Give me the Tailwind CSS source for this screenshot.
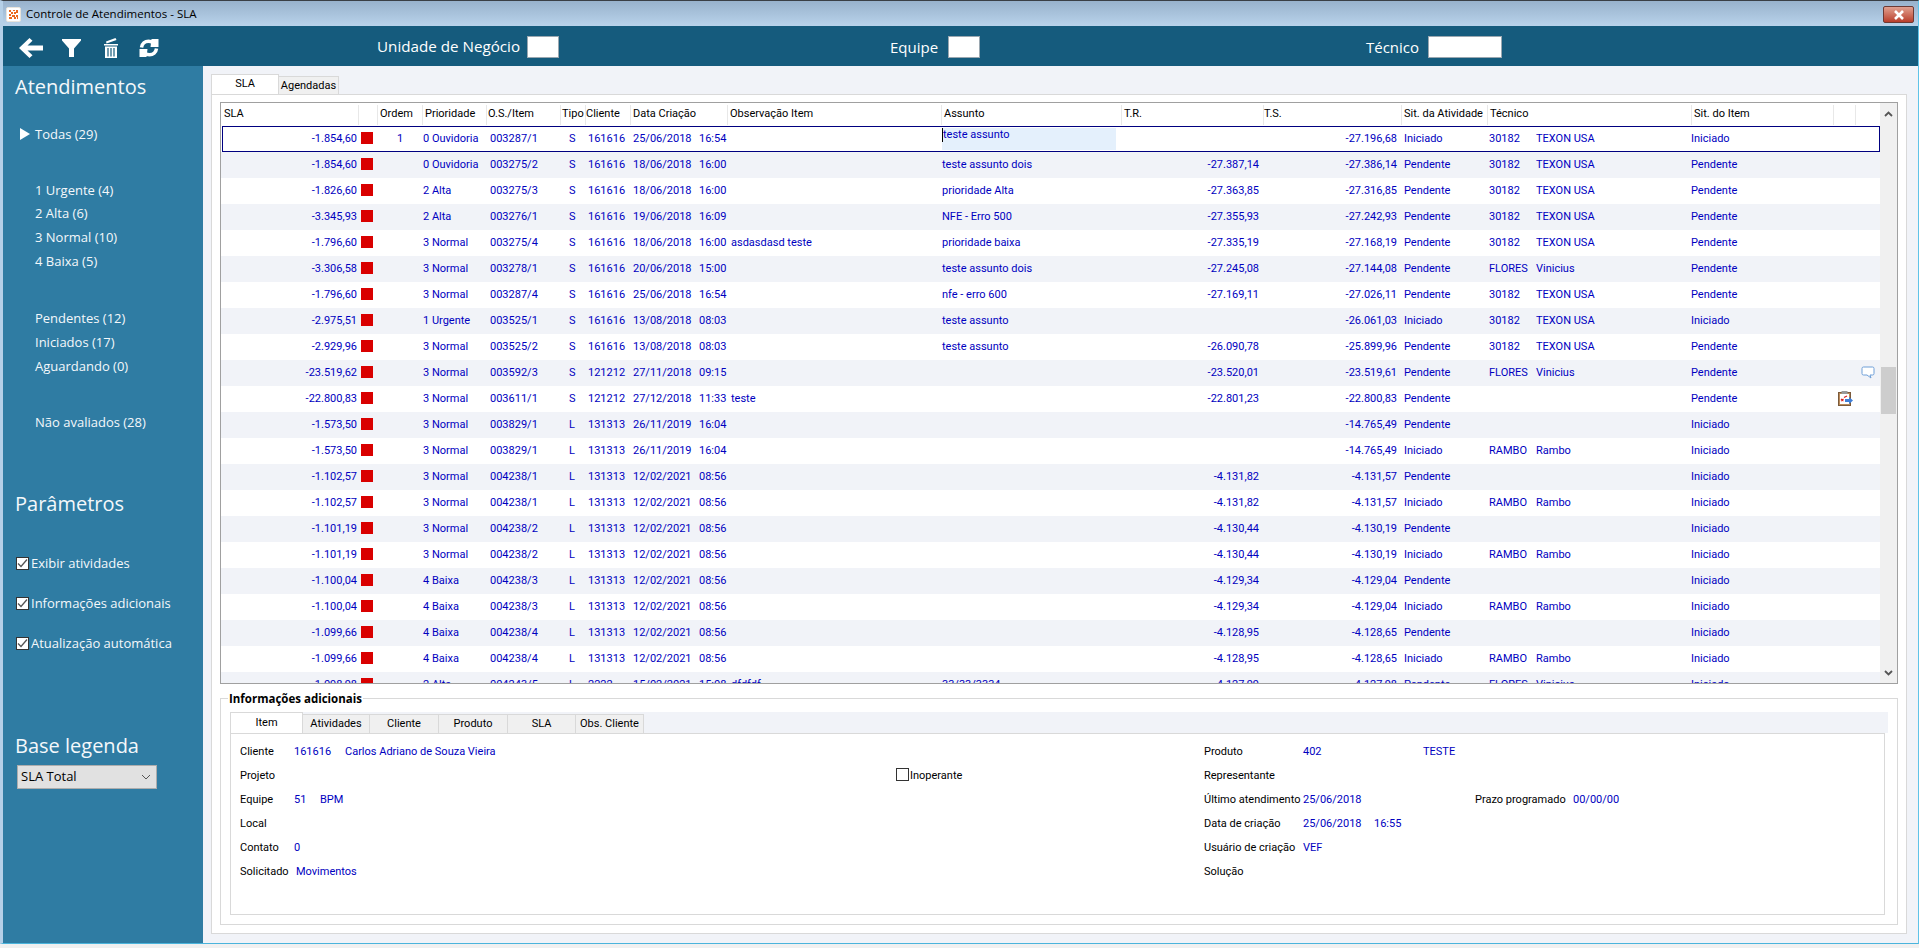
<!DOCTYPE html>
<html lang="pt-BR">
<head>
<meta charset="UTF-8">
<title>Controle de Atendimentos - SLA</title>
<script src="https://cdn.jsdelivr.net/npm/@tailwindcss/browser@4"></script>
</head>
<body class="w-[1919px] h-[948px] overflow-hidden bg-[#f0f0f0] font-['Open_Sans',sans-serif]">
<div class="h-[944px] flex flex-col border-t border-[#3a3f45] border-l-[3px] border-r border-l-[#b5d0e8] border-r-[#5fc3e8] border-b border-b-[#4ab4dc] bg-[#f1f3f8]">
  <!-- barra de titulo -->
  <div class="h-[25px] shrink-0 flex items-center bg-gradient-to-b from-[#98b2cc] to-[#b9d3eb] pl-[3px] pr-[4px]">
    <svg width="15" height="15" viewBox="0 0 15 15" class="shrink-0 mt-[2px]"><rect x=".5" y=".5" width="14" height="14" rx="1.500" fill="#fff" stroke="#e9e4dc"/><path d="M3 3h2v2H3zM7 3h2v1H7zM10 3h2v3h-2zM5 5h2v2H5zM8 5h2v2H8zM3 7h2v2H3zM6 8h3v2H6zM10 8h2v2h-2zM3 10h2v2H3zM5 10h1v2H5zM8 10h2v2H8zM11 10h1v2h-1z" fill="#ea6a20"/></svg>
    <span class="ml-[5px] mt-[1px] text-[11.5px] text-black whitespace-nowrap">Controle de Atendimentos - SLA</span>
    <div class="ml-auto mt-[2px] w-[31px] h-[17px] rounded-[2px] border border-[#6d3a34] bg-gradient-to-b from-[#e0a090] to-[#b83d2b] flex items-center justify-center">
      <svg width="12" height="10" viewBox="0 0 12 10"><path d="M2 1l8 8M10 1l-8 8" stroke="#fff" stroke-width="2.600"/></svg>
    </div>
  </div>
  <!-- toolbar -->
  <div class="h-[40px] shrink-0 bg-[#155b7d] relative flex items-center text-white">
    <div class="w-[358px] flex items-center mt-[3px]">
      <svg class="ml-[16px]" width="24" height="20" viewBox="0 0 24 20"><path d="M10.500 0l3 2.800L8.500 7.500H24v5H8.500l5 4.700-3 2.800L0 10z" fill="#fff"/></svg>
      <svg class="ml-[19px]" width="19" height="18" viewBox="0 0 19 18"><path d="M0 0h19v1.500L12 9.500V18H7V9.500L0 1.500z" fill="#fff"/></svg>
      <svg class="ml-[22px]" width="16" height="20" viewBox="0 0 16 20"><path d="M3 3.500L12.500 0l1 2L3.500 5.500zM1 6h14v1.500H1zM2 8.500h12V20H2z" fill="#fff"/><path d="M5 10v8.500M8 10v8.500M11 10v8.500" stroke="#155b7d" stroke-width="1.200"/></svg>
      <svg class="ml-[20px]" width="20" height="20" viewBox="0 0 20 20"><path d="M2.500 9.500C3 5.500 6 3.200 9.500 3.200c1.900 0 3.400.6 4.500 1.800" fill="none" stroke="#fff" stroke-width="3.500"/><path d="M12.500 1h7v8h-8z" fill="#fff"/><path d="M17.500 10.500c-.5 4-3.500 6.300-7 6.300-1.900 0-3.400-.6-4.500-1.800" fill="none" stroke="#fff" stroke-width="3.500"/><path d="M7.500 19h-7v-8h8z" fill="#fff"/></svg>
    </div>
    <span class="ml-[16px] text-[15.200px] whitespace-nowrap">Unidade de Negócio</span>
    <div class="absolute left-[524px] top-[10px] w-[32px] h-[22px] bg-white border border-[#9aa7b0]"></div>
    <span class="absolute left-[887px] top-[10px] text-[15px]">Equipe</span>
    <div class="absolute left-[945px] top-[10px] w-[32px] h-[22px] bg-white border border-[#9aa7b0]"></div>
    <span class="absolute left-[1363px] top-[10px] text-[15px]">Técnico</span>
    <div class="absolute left-[1425px] top-[10px] w-[74px] h-[22px] bg-white border border-[#9aa7b0]"></div>
  </div>
  <div class="flex-1 flex min-h-0">
    <!-- lateral -->
    <aside class="w-[200px] shrink-0 bg-[#2f7ca3] text-[#f4f8fb] relative text-[13px]">
      <h2 class="absolute left-[12px] top-[7px] text-[20px] leading-[28px]">Atendimentos</h2>
      <div class="absolute left-[17px] top-[58px] leading-[20px] flex items-center"><span class="w-0 h-0 border-y-[6px] border-y-transparent border-l-[10px] border-l-white mr-[5px]"></span>Todas (29)</div>
      <div class="absolute left-[32px] top-[114px] leading-[20px]">1 Urgente (4)</div>
      <div class="absolute left-[32px] top-[137px] leading-[20px]">2 Alta (6)</div>
      <div class="absolute left-[32px] top-[161px] leading-[20px]">3 Normal (10)</div>
      <div class="absolute left-[32px] top-[185px] leading-[20px]">4 Baixa (5)</div>
      <div class="absolute left-[32px] top-[242px] leading-[20px]">Pendentes (12)</div>
      <div class="absolute left-[32px] top-[266px] leading-[20px]">Iniciados (17)</div>
      <div class="absolute left-[32px] top-[290px] leading-[20px]">Aguardando (0)</div>
      <div class="absolute left-[32px] top-[346px] leading-[20px]">Não avaliados (28)</div>
      <h2 class="absolute left-[12px] top-[424px] text-[20px] leading-[28px]">Parâmetros</h2>
      <label class="absolute left-[13px] top-[487px] flex items-center leading-[20px]"><span class="w-[13px] h-[13px] bg-white border border-[#333] mr-[2px] flex items-center justify-center"><svg width="11" height="11" viewBox="0 0 11 11"><path d="M1 5.500l3 3 6-7" fill="none" stroke="#555" stroke-width="1.300"/></svg></span>Exibir atividades</label>
      <label class="absolute left-[13px] top-[527px] flex items-center leading-[20px]"><span class="w-[13px] h-[13px] bg-white border border-[#333] mr-[2px] flex items-center justify-center"><svg width="11" height="11" viewBox="0 0 11 11"><path d="M1 5.500l3 3 6-7" fill="none" stroke="#555" stroke-width="1.300"/></svg></span>Informações adicionais</label>
      <label class="absolute left-[13px] top-[567px] flex items-center leading-[20px]"><span class="w-[13px] h-[13px] bg-white border border-[#333] mr-[2px] flex items-center justify-center"><svg width="11" height="11" viewBox="0 0 11 11"><path d="M1 5.500l3 3 6-7" fill="none" stroke="#555" stroke-width="1.300"/></svg></span>Atualização automática</label>
      <h2 class="absolute left-[12px] top-[666px] text-[20px] leading-[28px]">Base legenda</h2>
      <div class="absolute left-[14px] top-[699px] w-[140px] h-[24px] bg-[#e1e1e1] border border-[#adadad] flex items-center pl-[3px] text-black">SLA Total
        <svg class="absolute right-[5px] top-[8px]" width="10" height="6" viewBox="0 0 10 6"><path d="M1 1l4 4 4-4" fill="none" stroke="#555"/></svg>
      </div>
    </aside>
    <main class="flex-1 min-w-0 relative px-[8px] pt-[8px] font-['Roboto',sans-serif]">
      <div class="flex h-[20px] items-end text-[11px] text-black">
        <div class="w-[68px] h-[20px] bg-white border border-b-0 border-[#d9d9d9] text-center leading-[14px] pt-[2px]">SLA</div>
        <div class="w-[60px] h-[18px] bg-[#f0f0f0] border border-l-0 border-b-0 border-[#d9d9d9] text-center leading-[18px]">Agendadas</div>
      </div>
      <div class="w-[1696px] h-[840px] bg-white border border-[#d9d9d9] pl-[8px] pt-[7px] relative">
        <!-- grade -->
        <div class="w-[1678px] h-[582px] border border-[#a0a0a0] flex overflow-hidden text-[11px] bg-white">
          <div class="flex-1 min-w-0 flex flex-col">
            <div id="hdr" class="h-[23px] shrink-0 relative text-black bg-white"></div>
            <div id="rows"></div>
          </div>
          <div class="w-[17px] shrink-0 bg-[#f0f0f0] relative">
            <svg class="absolute left-[4px] top-[8px]" width="9" height="6" viewBox="0 0 9 6"><path d="M1 5l3.500-3.500L8 5" fill="none" stroke="#555" stroke-width="1.800"/></svg>
            <div class="absolute left-[1px] top-[264px] w-[15px] h-[47px] bg-[#cdcdcd]"></div>
            <svg class="absolute left-[4px] top-[567px]" width="9" height="6" viewBox="0 0 9 6"><path d="M1 1l3.500 3.500L8 1" fill="none" stroke="#555" stroke-width="1.800"/></svg>
          </div>
        </div>
        <!-- informacoes adicionais -->
        <div class="mt-[14px] w-[1678px] h-[227px] border border-[#d9d9d9] pl-[9px] pr-[9px] pt-[13px] text-[11px] relative">
          <span class="absolute -top-[7px] left-[7px] bg-white px-[1px] font-bold font-['Open_Sans',sans-serif] text-black leading-[14px] text-[11.500px]">Informações adicionais</span>
          <div class="h-[21px] w-[1658px] bg-[#f1f3f8] flex items-end text-black">
            <div class="w-[73px] h-[21px] bg-white border border-b-0 border-[#d9d9d9] text-center leading-[19px]">Item</div>
            <div class="w-[67px] h-[19px] bg-[#f0f0f0] border border-l-0 border-b-0 border-[#d9d9d9] text-center leading-[18px]">Atividades</div>
            <div class="w-[69px] h-[19px] bg-[#f0f0f0] border border-l-0 border-b-0 border-[#d9d9d9] text-center leading-[18px]">Cliente</div>
            <div class="w-[69px] h-[19px] bg-[#f0f0f0] border border-l-0 border-b-0 border-[#d9d9d9] text-center leading-[18px]">Produto</div>
            <div class="w-[68px] h-[19px] bg-[#f0f0f0] border border-l-0 border-b-0 border-[#d9d9d9] text-center leading-[18px]">SLA</div>
            <div class="w-[68px] h-[19px] bg-[#f0f0f0] border border-l-0 border-b-0 border-[#d9d9d9] text-center leading-[18px]">Obs. Cliente</div>
          </div>
          <div class="w-[1655px] h-[182px] bg-white border border-[#d9d9d9] relative text-[#0000c0] leading-[14px]">
            <span class="absolute left-[9px] top-[11px] text-black">Cliente</span><span class="absolute left-[63px] top-[11px]">161616</span><span class="absolute left-[114px] top-[11px]">Carlos Adriano de Souza Vieira</span>
            <span class="absolute left-[9px] top-[35px] text-black">Projeto</span>
            <span class="absolute left-[665px] top-[34px] w-[13px] h-[13px] border border-[#333] bg-white"></span><span class="absolute left-[679px] top-[35px] text-black">Inoperante</span>
            <span class="absolute left-[9px] top-[59px] text-black">Equipe</span><span class="absolute left-[63px] top-[59px]">51</span><span class="absolute left-[89px] top-[59px]">BPM</span>
            <span class="absolute left-[9px] top-[83px] text-black">Local</span>
            <span class="absolute left-[9px] top-[107px] text-black">Contato</span><span class="absolute left-[63px] top-[107px]">0</span>
            <span class="absolute left-[9px] top-[131px] text-black">Solicitado</span><span class="absolute left-[65px] top-[131px]">Movimentos</span>
            <span class="absolute left-[973px] top-[11px] text-black">Produto</span><span class="absolute left-[1072px] top-[11px]">402</span><span class="absolute left-[1192px] top-[11px]">TESTE</span>
            <span class="absolute left-[973px] top-[35px] text-black">Representante</span>
            <span class="absolute left-[973px] top-[59px] text-black">Último atendimento</span><span class="absolute left-[1072px] top-[59px]">25/06/2018</span>
            <span class="absolute left-[1244px] top-[59px] text-black">Prazo programado</span><span class="absolute left-[1342px] top-[59px]">00/00/00</span>
            <span class="absolute left-[973px] top-[83px] text-black">Data de criação</span><span class="absolute left-[1072px] top-[83px]">25/06/2018</span><span class="absolute left-[1143px] top-[83px]">16:55</span>
            <span class="absolute left-[973px] top-[107px] text-black">Usuário de criação</span><span class="absolute left-[1072px] top-[107px]">VEF</span>
            <span class="absolute left-[973px] top-[131px] text-black">Solução</span>
          </div>
        </div>
      </div>
    </main>
  </div>
</div>
<script>
// colunas da grade: [titulo, recuo do texto, x do separador a direita] em relacao a grade
var cols=[["SLA",3,137],["",0,156],["Ordem",3,201],["Prioridade",3,265],["O.S./Item",2,339],["Tipo",2,364],["Cliente",1,409],["Data Criação",3,506],["Observação Item",3,720],["Assunto",3,900],["T.R.",3,1042],["T.S.",1,1180],["Sit. da Atividade",3,1266],["Técnico",3,1470],["Sit. do Item",3,1612],["",0,1634]];
var h="",prev=0;
cols.forEach(function(c){
  h+='<span class="absolute top-0 h-[23px] leading-[22px] whitespace-nowrap" style="left:'+(prev+c[1])+'px">'+c[0]+'</span>';
  h+='<span class="absolute top-[2px] h-[20px] w-px bg-[#e8e8e8]" style="left:'+c[2]+'px"></span>';
  prev=c[2];
});
document.getElementById("hdr").innerHTML=h;
var T30="30182|TEXON USA",FV="FLORES|Vinicius",RB="RAMBO|Rambo";
var d=[
["-1.854,60","1","0 Ouvidoria","003287/1","S","161616","25/06/2018","16:54","","teste assunto","","-27.196,68","Iniciado",T30,"Iniciado"],
["-1.854,60","","0 Ouvidoria","003275/2","S","161616","18/06/2018","16:00","","teste assunto dois","-27.387,14","-27.386,14","Pendente",T30,"Pendente"],
["-1.826,60","","2 Alta","003275/3","S","161616","18/06/2018","16:00","","prioridade Alta","-27.363,85","-27.316,85","Pendente",T30,"Pendente"],
["-3.345,93","","2 Alta","003276/1","S","161616","19/06/2018","16:09","","NFE - Erro 500","-27.355,93","-27.242,93","Pendente",T30,"Pendente"],
["-1.796,60","","3 Normal","003275/4","S","161616","18/06/2018","16:00","asdasdasd teste","prioridade baixa","-27.335,19","-27.168,19","Pendente",T30,"Pendente"],
["-3.306,58","","3 Normal","003278/1","S","161616","20/06/2018","15:00","","teste assunto dois","-27.245,08","-27.144,08","Pendente",FV,"Pendente"],
["-1.796,60","","3 Normal","003287/4","S","161616","25/06/2018","16:54","","nfe - erro 600","-27.169,11","-27.026,11","Pendente",T30,"Pendente"],
["-2.975,51","","1 Urgente","003525/1","S","161616","13/08/2018","08:03","","teste assunto","","-26.061,03","Iniciado",T30,"Iniciado"],
["-2.929,96","","3 Normal","003525/2","S","161616","13/08/2018","08:03","","teste assunto","-26.090,78","-25.899,96","Pendente",T30,"Pendente"],
["-23.519,62","","3 Normal","003592/3","S","121212","27/11/2018","09:15","","","-23.520,01","-23.519,61","Pendente",FV,"Pendente"],
["-22.800,83","","3 Normal","003611/1","S","121212","27/12/2018","11:33","teste","","-22.801,23","-22.800,83","Pendente","","Pendente"],
["-1.573,50","","3 Normal","003829/1","L","131313","26/11/2019","16:04","","","","-14.765,49","Pendente","","Iniciado"],
["-1.573,50","","3 Normal","003829/1","L","131313","26/11/2019","16:04","","","","-14.765,49","Iniciado",RB,"Iniciado"],
["-1.102,57","","3 Normal","004238/1","L","131313","12/02/2021","08:56","","","-4.131,82","-4.131,57","Pendente","","Iniciado"],
["-1.102,57","","3 Normal","004238/1","L","131313","12/02/2021","08:56","","","-4.131,82","-4.131,57","Iniciado",RB,"Iniciado"],
["-1.101,19","","3 Normal","004238/2","L","131313","12/02/2021","08:56","","","-4.130,44","-4.130,19","Pendente","","Iniciado"],
["-1.101,19","","3 Normal","004238/2","L","131313","12/02/2021","08:56","","","-4.130,44","-4.130,19","Iniciado",RB,"Iniciado"],
["-1.100,04","","4 Baixa","004238/3","L","131313","12/02/2021","08:56","","","-4.129,34","-4.129,04","Pendente","","Iniciado"],
["-1.100,04","","4 Baixa","004238/3","L","131313","12/02/2021","08:56","","","-4.129,34","-4.129,04","Iniciado",RB,"Iniciado"],
["-1.099,66","","4 Baixa","004238/4","L","131313","12/02/2021","08:56","","","-4.128,95","-4.128,65","Pendente","","Iniciado"],
["-1.099,66","","4 Baixa","004238/4","L","131313","12/02/2021","08:56","","","-4.128,95","-4.128,65","Iniciado",RB,"Iniciado"],
["-1.098,98","","2 Alta","004243/5","L","2222","15/02/2021","15:08","dfdfdf","33/33/3334","-4.127,99","-4.127,98","Pendente",FV,"Iniciado"]
];
var out="";
d.forEach(function(r,i){
  var bg=i%2?"#f1f3f8":"#ffffff";
  var s='<div class="h-[26px] relative text-[#0000c0] whitespace-nowrap leading-[26px]" style="background:'+bg+'">';
  function at(x,t){ if(t) s+='<span class="absolute top-0" style="left:'+x+'px">'+t+'</span>'; }
  function right(x,t){ if(t) s+='<span class="absolute top-0" style="right:'+(1658-x)+'px">'+t+'</span>'; }
  right(135,r[0]);
  s+='<span class="absolute top-[6px] left-[140px] w-[12px] h-[12px] bg-[#d90000]"></span>';
  if(r[1]) s+='<span class="absolute top-0 left-[176px]">'+r[1]+'</span>';
  at(202,r[2]); at(269,r[3]); at(348,r[4]); at(367,r[5]); at(412,r[6]); at(478,r[7]); at(510,r[8]);
  if(i==0) s+='<span class="absolute top-[2px] left-[721px] w-[174px] h-[22px] bg-[#e4f0fc] leading-[14px] pl-[1px]">'+r[9]+'</span><span class="absolute top-[2px] left-[721px] w-px h-[14px] bg-black"></span>'; else at(721,r[9]);
  right(1037,r[10]); right(1175,r[11]); at(1183,r[12]);
  if(r[13]){var t=r[13].split("|"); at(1268,t[0]); at(1315,t[1]);}
  at(1470,r[14]);
  if(i==9) s+='<svg class="absolute left-[1640px] top-[6px]" width="14" height="13" viewBox="0 0 14 13"><path d="M2.500 1h9A1.500 1.500 0 0 1 13 2.500v5A1.500 1.500 0 0 1 11.500 9H9l1 3-4-3H2.500A1.500 1.500 0 0 1 1 7.500v-5A1.500 1.500 0 0 1 2.500 1z" fill="#fff" stroke="#6f9fd8"/></svg>';
  if(i==10) s+='<svg class="absolute left-[1616px] top-[4px]" width="17" height="17" viewBox="0 0 17 17"><rect x="1.500" y="2.500" width="12" height="13" fill="#b98a5a" stroke="#7b5a3a"/><rect x="3" y="4" width="9" height="10" fill="#fff"/><rect x="4.500" y="1" width="6" height="3" fill="#999"/><path d="M4 9l2.500 2M6.500 9L4 11M7 7.500l3-1.500" stroke="#d92020" stroke-width="1.300"/><path d="M8 9h4V7l4 3.500-4 3.500v-2H8z" fill="#3f7fd8"/></svg>';
  if(i==0) s+='<span class="absolute left-[1px] top-0 right-0 bottom-0 border border-[#000080] pointer-events-none"></span>';
  s+='</div>';
  out+=s;
});
document.getElementById("rows").innerHTML=out;
</script>
</body>
</html>
